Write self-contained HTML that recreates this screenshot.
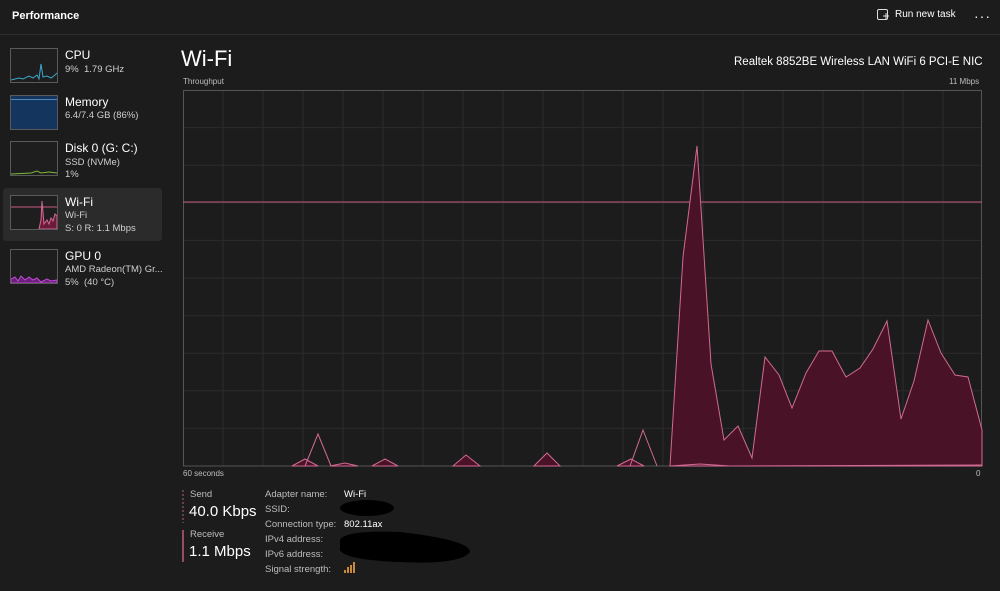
<!DOCTYPE html>
<html><head><style>
body{margin:0;width:1000px;height:591px;background:#1c1c1c;font-family:"Liberation Sans",sans-serif;color:#fff;overflow:hidden;position:relative}
.t{position:absolute;white-space:nowrap}
.thumb{position:absolute;left:10px;width:46px;height:33px;border:1px solid #5a5a5a;background:#1e1e1e}
.lbl{font-size:12px;color:#fff}
.sub{font-size:9.5px;color:#cfcfcf}
.k{font-size:9.5px;color:#bdbdbd}
</style></head><body>
<div class="t" style="left:12px;top:10px;font-size:11px;font-weight:bold">Performance</div>
<div style="position:absolute;left:0;top:34px;width:1000px;height:1px;background:#2e2e2e"></div>
<svg class="t" style="left:876px;top:8px" width="14" height="14" viewBox="0 0 14 14"><rect x="1.5" y="1.5" width="10" height="10" rx="1.5" fill="none" stroke="#ddd"/><path d="M7 8h6M10 5v6" stroke="#ddd"/></svg>
<div class="t" style="left:895px;top:9px;font-size:10px">Run new task</div>
<div class="t" style="left:974px;top:8px;font-size:14px;letter-spacing:1px">···</div>

<div style="position:absolute;left:3px;top:188px;width:159px;height:53px;background:#2b2b2b;border-radius:3px"></div>
<div class="thumb" style="top:48px"><svg width="46" height="33"><path d="M0 31 L8 29 12 30 18 27 22 29 26 26 28 30 30 15 32 28 36 27 40 29 44 26 46 24" stroke="#3aa7c9" fill="none"/></svg></div>
<div class="thumb" style="top:95px;background:#14365e"><div style="margin-top:3px;height:1px;background:#4e86c0"></div></div>
<div class="thumb" style="top:141px"><svg width="46" height="33"><path d="M0 32 L20 31 26 29 30 31 38 30 46 31" stroke="#7cba3a" fill="none"/></svg></div>
<div class="thumb" style="top:195px"><svg width="46" height="33"><line x1="0" y1="11" x2="46" y2="11" stroke="#c85b84"/><path d="M28 33 L30 24 31 5 33 28 36 24 38 28 40 22 42 25 44 18 46 20 L46 33Z" fill="#6b1a3a" stroke="#d46a94"/></svg></div>
<div class="thumb" style="top:249px"><svg width="46" height="33"><path d="M0 33 L0 29 4 27 7 31 10 26 14 30 18 27 22 30 26 28 30 32 36 29 40 31 46 30 46 33Z" fill="#6a1f7a" stroke="#c04ad8"/></svg></div>

<div class="t lbl" style="left:65px;top:48px">CPU</div><div class="t sub" style="left:65px;top:64px">9%&nbsp; 1.79 GHz</div>
<div class="t lbl" style="left:65px;top:95px">Memory</div><div class="t sub" style="left:65px;top:110px">6.4/7.4 GB (86%)</div>
<div class="t lbl" style="left:65px;top:141px">Disk 0 (G: C:)</div><div class="t sub" style="left:65px;top:157px">SSD (NVMe)</div><div class="t sub" style="left:65px;top:169px">1%</div>
<div class="t lbl" style="left:65px;top:195px">Wi-Fi</div><div class="t sub" style="left:65px;top:210px">Wi-Fi</div><div class="t sub" style="left:65px;top:223px">S: 0 R: 1.1 Mbps</div>
<div class="t lbl" style="left:65px;top:249px">GPU 0</div><div class="t sub" style="left:65px;top:264px">AMD Radeon(TM) Gr...</div><div class="t sub" style="left:65px;top:277px">5%&nbsp; (40 °C)</div>

<div class="t" style="left:181px;top:46px;font-size:22px">Wi-Fi</div>
<div class="t" style="left:734px;top:56px;font-size:11.5px">Realtek 8852BE Wireless LAN WiFi 6 PCI-E NIC</div>
<div class="t k" style="left:183px;top:77px;font-size:8px">Throughput</div>
<div class="t k" style="left:949px;top:77px;font-size:8px">11 Mbps</div>
<div class="t k" style="left:183px;top:469px;font-size:8px">60 seconds</div>
<div class="t k" style="left:976px;top:469px;font-size:8px">0</div>

<svg class="t" style="left:0;top:0" width="1000" height="591">
<g stroke="#2b2b2b" stroke-width="1">
<path d="M183 127.6H982M183 165.2H982M183 202.8H982M183 240.4H982M183 278H982M183 315.6H982M183 353.2H982M183 390.8H982M183 428.4H982"/>
<path d="M223 90V466M263 90V466M303 90V466M343 90V466M383 90V466M423 90V466M463 90V466M503 90V466M543 90V466M583 90V466M623 90V466M663 90V466M703 90V466M743 90V466M783 90V466M823 90V466M863 90V466M903 90V466M943 90V466"/>
</g>
<rect x="183.5" y="90.5" width="798" height="375.5" fill="none" stroke="#555"/>
<line x1="183" y1="202" x2="982" y2="202" stroke="#c45a82"/>
<g fill="#4a1227" stroke="#d06a92" stroke-width="1">
<path d="M292 466 L305 459 318 466Z"/><path d="M330 466 L345 463 358 466Z"/><path d="M372 466 L385 459 398 466Z"/><path d="M453 466 L466 455 480 466Z"/><path d="M534 466 L547 453 560 466Z"/><path d="M617 466 L631 459 644 466Z"/>
<path d="M670 466 L683 257 697 146 711 364 724 440 738 426 752 458 765 357 779 375 792 408 806 373 819 351 832 351 846 377 860 368 873 349 887 321 901 419 914 381 928 320 941 353 955 375 968 377 982 430 982 466Z"/>
</g>
<path d="M305 466 L318 434 331 466" fill="none" stroke="#d06a92"/>
<path d="M630 466 L643 430 657 466" fill="none" stroke="#d06a92"/>
<path d="M670 466 L700 464 730 466 982 465" fill="none" stroke="#d06a92"/>
<line x1="183" y1="490" x2="183" y2="523" stroke="#c45a82" stroke-dasharray="2,2"/>
<line x1="183" y1="530" x2="183" y2="562" stroke="#c45a82" stroke-width="1.5"/>
<ellipse cx="367" cy="508" rx="27" ry="8" fill="#000"/>
<path d="M340 540 Q345 530 400 532 Q470 540 470 552 Q460 565 400 562 Q345 560 340 550Z" fill="#000"/>
<g fill="#c88a3a"><rect x="344" y="570" width="2" height="3"/><rect x="347" y="567" width="2" height="6"/><rect x="350" y="565" width="2" height="8"/><rect x="353" y="562" width="2" height="11"/></g>
</svg>

<div class="t k" style="left:190px;top:489px">Send</div>
<div class="t" style="left:189px;top:503px;font-size:15px">40.0 Kbps</div>
<div class="t k" style="left:190px;top:529px">Receive</div>
<div class="t" style="left:189px;top:543px;font-size:15px">1.1 Mbps</div>
<div class="t k" style="left:265px;top:489px">Adapter name:</div><div class="t" style="left:344px;top:489px;font-size:9.5px">Wi-Fi</div>
<div class="t k" style="left:265px;top:504px">SSID:</div>
<div class="t k" style="left:265px;top:519px">Connection type:</div><div class="t" style="left:344px;top:519px;font-size:9.5px">802.11ax</div>
<div class="t k" style="left:265px;top:534px">IPv4 address:</div>
<div class="t k" style="left:265px;top:549px">IPv6 address:</div>
<div class="t k" style="left:265px;top:564px">Signal strength:</div>
</body></html>
